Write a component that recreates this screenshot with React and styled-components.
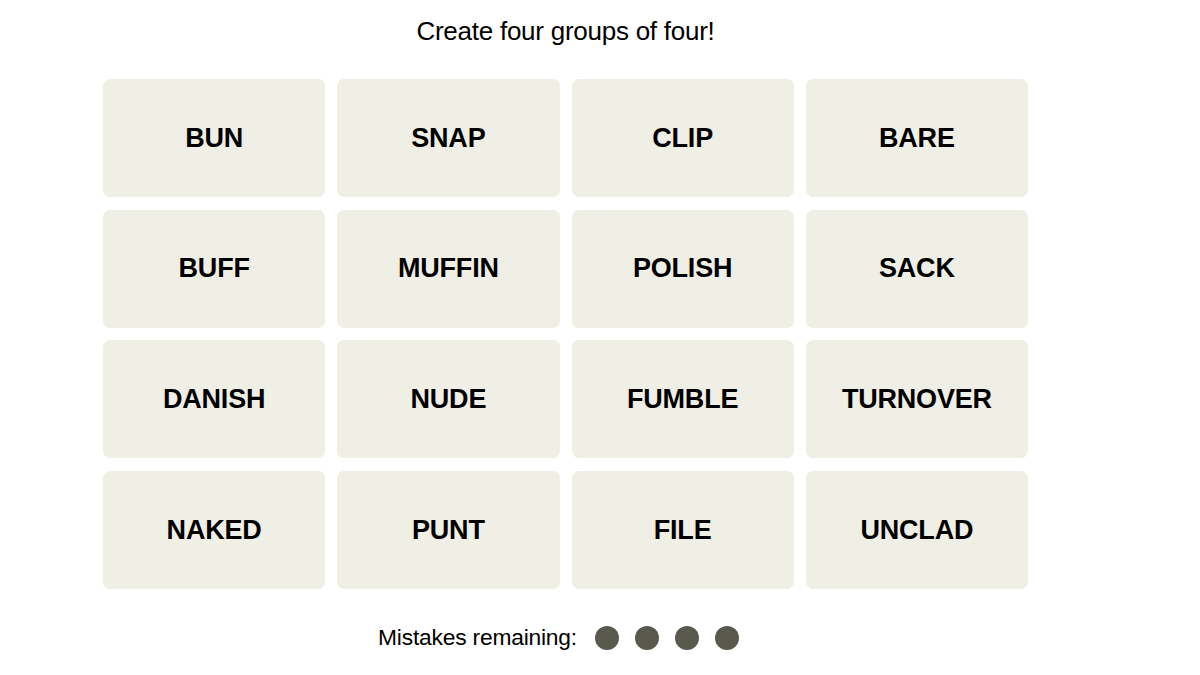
import React from "react";
import styled, { createGlobalStyle } from "styled-components";

const Global = createGlobalStyle`
  html, body { margin: 0; padding: 0; background: #fff; }
  body { font-family: "Liberation Sans", Arial, sans-serif; color: #000; }
`;

const Page = styled.div`
  width: 925px;
  margin-left: 103px;
  display: flex;
  flex-direction: column;
  align-items: center;
`;

const Title = styled.h2`
  margin: 16px 0 0;
  height: 31px;
  font-size: 26px;
  font-weight: 400;
  line-height: 31px;
  letter-spacing: -0.25px;
`;

const Grid = styled.div`
  margin-top: 32px;
  width: 100%;
  display: grid;
  grid-template-columns: repeat(4, 1fr);
  column-gap: 12px;
  row-gap: 12.7px;
`;

const Tile = styled.button`
  height: 118px;
  border: none;
  border-radius: 7px;
  background: #efefe6;
  color: #000;
  font-family: "Liberation Sans", Arial, sans-serif;
  font-weight: 700;
  font-size: 27px;
  letter-spacing: -0.2px;
  text-transform: uppercase;
  display: flex;
  align-items: center;
  justify-content: center;
  padding: 0;
`;

const Mistakes = styled.div`
  margin-top: 35px;
  padding-right: 14px;
  display: flex;
  align-items: center;
  gap: 18px;
  font-size: 22.8px;
  letter-spacing: -0.2px;
`;

const Dots = styled.div`
  display: flex;
  gap: 16px;
`;

const Dot = styled.span`
  width: 24px;
  height: 24px;
  border-radius: 50%;
  background: #5a594e;
`;

const words = [
  "BUN", "SNAP", "CLIP", "BARE",
  "BUFF", "MUFFIN", "POLISH", "SACK",
  "DANISH", "NUDE", "FUMBLE", "TURNOVER",
  "NAKED", "PUNT", "FILE", "UNCLAD",
];

export default function App() {
  return (
    <>
      <Global />
      <Page>
        <Title>Create four groups of four!</Title>
        <Grid>
          {words.map((w) => (
            <Tile key={w}>{w}</Tile>
          ))}
        </Grid>
        <Mistakes>
          Mistakes remaining:
          <Dots>
            {[0, 1, 2, 3].map((i) => (
              <Dot key={i} />
            ))}
          </Dots>
        </Mistakes>
      </Page>
    </>
  );
}
